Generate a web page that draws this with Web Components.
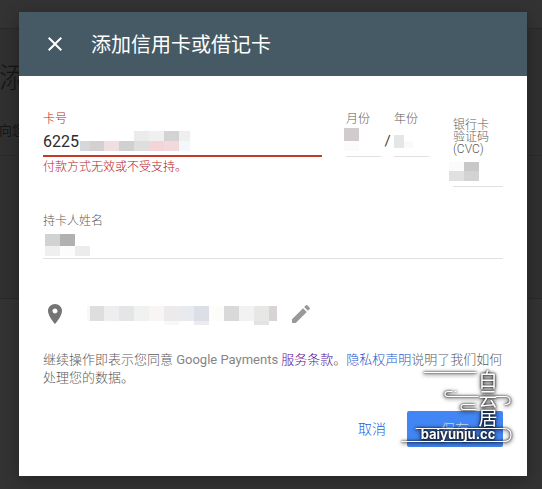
<!DOCTYPE html>
<html lang="zh-CN">
<head>
<meta charset="utf-8">
<title>添加信用卡或借记卡</title>
<style>
html, body { margin: 0; min-height: 100vh; background: #333; }
body { font-family: Roboto, "Noto Sans CJK SC", sans-serif; font-size: 13px; color: #5c5c5c; }
</style>
</head>
<body>
<page-backdrop>
  <pay-dialog heading="添加信用卡或借记卡">
    <card-row>
      <text-field name="card" label="卡号" value="6225" error="付款方式无效或不受支持。">
        <pixel-mosaic cells="91 7 15 10 ebebeb;106 7 15 10 f0f0f0;121 7 15 10 d3d3d4;136 7 11 10 efefef;37 17 10 10 d4d7db;47 17 14 10 d2d0d1;61 17 15 10 efdfe0;76 17 15 10 d0d0d1;91 17 15 10 dededd;106 17 15 10 f4d5d7;121 17 15 10 f2d9dc;136 17 11 10 f2f8fd"></pixel-mosaic>
      </text-field>
      <expiry-group>
        <text-field name="month" label="月份"><pixel-mosaic cells="-2 4 15 13 d2cbcd;-2 17 15 10 fbfbfb"></pixel-mosaic></text-field>
        <text-field name="year" label="年份" slot="year"><pixel-mosaic cells="0 11 10 13 e5e6e6;10 17 9 7 fafafa"></pixel-mosaic></text-field>
      </expiry-group>
      <text-field name="cvc" label="银行卡验证码(CVC)" lowered><pixel-mosaic cells="-4 8 15 9 fbfbfb;11 8 15 9 c9c8c8;-4 17 15 10 e2dfdf;11 17 15 10 d3d3d6"></pixel-mosaic></text-field>
    </card-row>
    <text-field name="holder" label="持卡人姓名"><pixel-mosaic cells="2 8 15 12 d0d3d2;17 8 15 12 b0b1b0;2 20 15 10 efefef;17 20 15 10 fcfcfc;32 20 15 10 ececec"></pixel-mosaic></text-field>
    <address-row>
      <pixel-mosaic inline cells="0 4 3 15 f8f8f8;3 4 14 15 dedede;17 4 15 15 eeeeee;32 4 15 15 e5e5e8;47 4 15 15 f0f2f1;62 4 15 15 f9f5f4;77 4 15 15 eceaea;92 4 15 15 e9eaef;107 4 15 15 dddfe6;122 4 15 15 fcfcf8;137 4 15 15 d9d9da;152 4 15 15 f2f2f3;167 4 15 15 e7e8e6;182 4 8 15 d8d4d6;77 19 15 4 f8f8f8;107 19 15 4 ececec;167 19 15 4 e3e3e3"></pixel-mosaic>
    </address-row>
    <legal-note></legal-note>
    <dialog-actions></dialog-actions>
  </pay-dialog>
</page-backdrop>

<script>
function define(name, template, setup) {
  customElements.define(name, class extends HTMLElement {
    constructor() {
      super();
      this.attachShadow({ mode: 'open' });
    }
    connectedCallback() {
      this.shadowRoot.innerHTML = template;
      if (setup) setup.call(this, this.shadowRoot);
    }
  });
}

define('page-backdrop', `
<style>
:host { display: block; position: relative; min-height: 100vh; box-sizing: border-box; padding: 12px 15px 13px 19px; overflow: hidden; background: #333; }
.behind { position: absolute; inset: 28px 0 auto 0; height: 269px; border: solid #292929; border-width: 1px 0; background: #303030; color: #151515; }
.title { position: absolute; left: -1px; top: 34px; font-size: 28px; font-weight: 300; line-height: 32px; }
.note { position: absolute; left: -1px; top: 92px; font-size: 13px; line-height: 20px; white-space: nowrap; }
.rule { position: absolute; left: 0; right: 0; top: 126px; border-top: 1px solid #2b2b2b; }
</style>
<div class="behind" aria-hidden="true"><div class="title">添</div><div class="note">向您</div><div class="rule"></div></div>
<slot></slot>`);

define('pay-dialog', `
<style>
:host { display: block; position: relative; background: #fff; box-shadow: 0 4px 16px rgba(0,0,0,.3); }
header { display: flex; align-items: center; gap: 24px; height: 64px; box-sizing: border-box; padding: 0 24px; background: #455a64; color: #fff; }
button { display: flex; width: 24px; height: 24px; padding: 0; border: 0; background: none; color: inherit; }
h1 { margin: 0; padding-top: 1px; font-size: 20px; line-height: 28px; font-weight: 400; }
.body { padding: 36px 24px 29px; }
</style>
<header>
  <button type="button" aria-label="关闭"><svg width="24" height="24" viewBox="0 0 24 24" fill="currentColor"><path d="M19 6.41L17.59 5 12 10.59 6.41 5 5 6.41 10.59 12 5 17.59 6.41 19 12 13.41 17.59 19 19 17.59 13.41 12z"/></svg></button>
  <h1></h1>
</header>
<div class="body"><slot></slot></div>`, function (root) {
  root.querySelector('h1').textContent = this.getAttribute('heading');
});

define('card-row', `
<style>
:host { display: grid; grid-template-columns: 1fr auto 50px; column-gap: 24px; align-items: start; margin-bottom: 27px; }
</style>
<slot></slot>`);

define('expiry-group', `
<style>
:host { display: grid; grid-template-columns: 35px 13px 35px; }
span { padding-top: 19px; text-align: center; font-size: 15px; line-height: 20px; color: #424242; }
</style>
<slot></slot><span>/</span><slot name="year"></slot>`);

define('text-field', `
<style>
:host { display: block; min-width: 0; }
:host([lowered]) { padding-top: 6px; }
:host([lowered]) label { padding-right: 8px; }
label { display: block; padding-top: 1px; font-size: 12px; font-weight: 300; line-height: 12px; }
.box { position: relative; margin-top: -1px; }
input { display: block; width: 100%; height: 33px; box-sizing: border-box; margin: 0; padding: 4px 0 0; border: 0; border-bottom: 1px solid #e0e0e0; border-radius: 0; outline: 0; background: none; font: 16px/20px Roboto, "Noto Sans CJK SC", sans-serif; color: #2c2c2c; }
.error { margin: 0; padding-top: 2px; font-size: 12px; font-weight: 300; line-height: 16px; }
:host([error]) label, .error { color: #b71c1c; }
:host([error]) input { border-bottom: 2px solid #c53929; }
</style>
<label for="field"></label>
<div class="box"><input id="field" type="text" autocomplete="off"><slot></slot></div>`, function (root) {
  const input = root.querySelector('input');
  root.querySelector('label').textContent = this.getAttribute('label');
  input.name = this.getAttribute('name');
  input.value = this.getAttribute('value') || '';
  if (this.hasAttribute('error')) {
    const p = document.createElement('p');
    p.className = 'error';
    p.id = 'error';
    p.textContent = this.getAttribute('error');
    input.setAttribute('aria-invalid', 'true');
    input.setAttribute('aria-describedby', 'error');
    root.append(p);
  }
});

define('pixel-mosaic', `
<style>
:host { display: block; position: absolute; inset: 0; pointer-events: none; }
:host([inline]) { position: static; width: 190px; height: 24px; }
svg { display: block; overflow: visible; }
</style>
<svg width="100%" height="100%" shape-rendering="crispEdges" aria-hidden="true"></svg>`, function (root) {
  root.querySelector('svg').innerHTML = this.getAttribute('cells').split(';').map(cell => {
    const [x, y, w, h, c] = cell.split(' ');
    return `<rect x="${x}" y="${y}" width="${w}" height="${h}" fill="#${c}"/>`;
  }).join('');
});

define('address-row', `
<style>
:host { display: flex; align-items: center; margin: 43px 0 25px; color: #757575; }
.pin { margin-right: 20px; }
button { display: flex; padding: 0; margin-left: 12px; border: 0; background: none; color: #999; }
</style>
<svg class="pin" width="24" height="24" viewBox="0 0 24 24" fill="currentColor" aria-hidden="true"><path d="M12 2C8.13 2 5 5.13 5 9c0 5.25 7 13 7 13s7-7.75 7-13c0-3.87-3.13-7-7-7zm0 9.5c-1.38 0-2.5-1.12-2.5-2.5s1.12-2.5 2.5-2.5 2.500 1.12 2.500 2.500-1.12 2.500-2.500 2.500z"/></svg>
<slot></slot>
<button type="button" aria-label="修改"><svg width="24" height="24" viewBox="0 0 24 24" fill="currentColor"><path d="M3 17.25V21h3.75L17.81 9.94l-3.75-3.75L3 17.25zM20.71 7.04c.39-.39.39-1.02 0-1.41l-2.34-2.34c-.39-.39-1.02-.39-1.41 0l-1.83 1.83 3.75 3.75 1.83-1.83z"/></svg></button>`);

define('legal-note', `
<style>
:host { display: block; }
p { margin: 0; font-size: 13px; line-height: 18px; font-weight: 300; }
.brand { font-weight: 400; color: #858585; }
a { text-decoration: none; color: #2456cc; }
a.seen { color: #5a0a94; }
</style>
<p>继续操作即表示您同意 <span class="brand">Google Payments</span> <a class="seen" href="#terms">服务条款</a>。<a href="#privacy">隐私权声明</a>说明了我们如何<wbr>处理您的数据。</p>`);

define('dialog-actions', `
<style>
:host { display: flex; justify-content: flex-end; gap: 8px; margin-top: 24px; position: relative; }
button { height: 36px; padding: 0 13px; border: 0; border-radius: 2px; background: none; font: 300 14px/20px Roboto, "Noto Sans CJK SC", sans-serif; color: #1f62df; }
.save { width: 96px; background: #4285f4; color: #d0d8e6; }
site-watermark { position: absolute; right: -10px; bottom: -1px; }
</style>
<button type="button">取消</button>
<button type="button" class="save">保存</button>
<site-watermark></site-watermark>`);

define('site-watermark', `
<style>
:host { display: block; pointer-events: none; }
svg { display: block; overflow: visible; filter: drop-shadow(0 0 1px #000) drop-shadow(0 1px 2px rgba(0,0,0,.75)); }
.han { font: 19px "Noto Sans CJK SC", sans-serif; }
.url { font: 700 13px Inter, "Open Sans", sans-serif; }
</style>
<svg width="113" height="80" viewBox="400 368 113 80" fill="#fff">
  <g fill="none" stroke="#fff" stroke-width="1.2" stroke-linecap="round">
    <path d="M424 372.5H476"/>
    <path d="M456 391.5h-1M452 391.5h-4q-3 0-3 2.500t4 2.500H478M496 396.500h9q5 0 5 4t-5 4"/>
    <path d="M475 404.500H464q-3 0-3 2.500t3 2.500H476"/>
    <path d="M416 428.500H504q7 0 7 6.500t-7 6.500H402"/>
  </g>
  <g class="han" text-anchor="middle"><text x="488" y="387">白</text><text x="488" y="406">云</text><text x="488" y="425">居</text></g>
  <text class="url" x="458" y="439" text-anchor="middle">baiyunju.cc</text>
</svg>`);
</script>
</body>
</html>
